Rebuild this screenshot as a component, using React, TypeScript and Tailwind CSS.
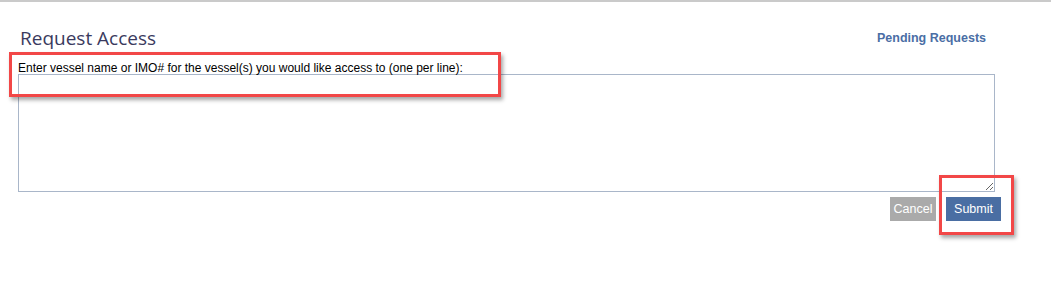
import { useState } from "react";

// Annotation boxes drawn over the form in the screenshot
const markClass =
    "pointer-events-none absolute border-[3px] border-[#f24747] shadow-[2px_3px_4px_rgba(0,0,0,0.35)]";

export default function App() {
    const [vessels, setVessels] = useState("");

    const bodyFont = { fontFamily: '"Liberation Sans", Arial, sans-serif' };

    return (
        <div className="relative h-[287px] w-[1051px] bg-white" style={bodyFont}>
            {/* Top rule */}
            <div className="h-[2px] w-full bg-[#cacaca]" />

            <div className="ml-[18px] w-[983px] pt-[22px]">
                {/* Header */}
                <div className="flex items-end justify-between">
                    <h1
                        className="pl-[2px] text-[19px] leading-[28px] text-[#3a3a5e]"
                        style={{ fontFamily: '"Open Sans", "Noto Sans", sans-serif' }}
                    >
                        Request Access
                    </h1>
                    <a
                        href="#"
                        className="mr-[15px] mb-[4px] text-[12.5px] font-bold text-[#4a6ea5]"
                    >
                        Pending Requests
                    </a>
                </div>

                {/* Vessel list */}
                <label className="block pt-[10px] text-[12px] leading-[12px] text-black">
                    Enter vessel name or IMO# for the vessel(s) you would like access to (one per line):
                </label>
                <textarea
                    value={vessels}
                    onChange={(e) => setVessels(e.target.value)}
                    className="block h-[118px] w-[977px] border border-[#a9b6c9] bg-white text-[12px] outline-none"
                />

                {/* Actions */}
                <div className="mt-[5px] flex justify-end gap-[10px]">
                    <button
                        type="button"
                        className="h-[24px] w-[46px] bg-[#aaaaaa] text-[12.5px] text-white"
                    >
                        Cancel
                    </button>
                    <button
                        type="submit"
                        className="h-[24px] w-[55px] bg-[#4a6ea3] text-[12.5px] text-white"
                    >
                        Submit
                    </button>
                </div>
            </div>

            <div className={`${markClass} left-[9px] top-[52px] h-[45px] w-[492px]`} />
            <div className={`${markClass} left-[939px] top-[175px] h-[60px] w-[75px]`} />
        </div>
    );
}
